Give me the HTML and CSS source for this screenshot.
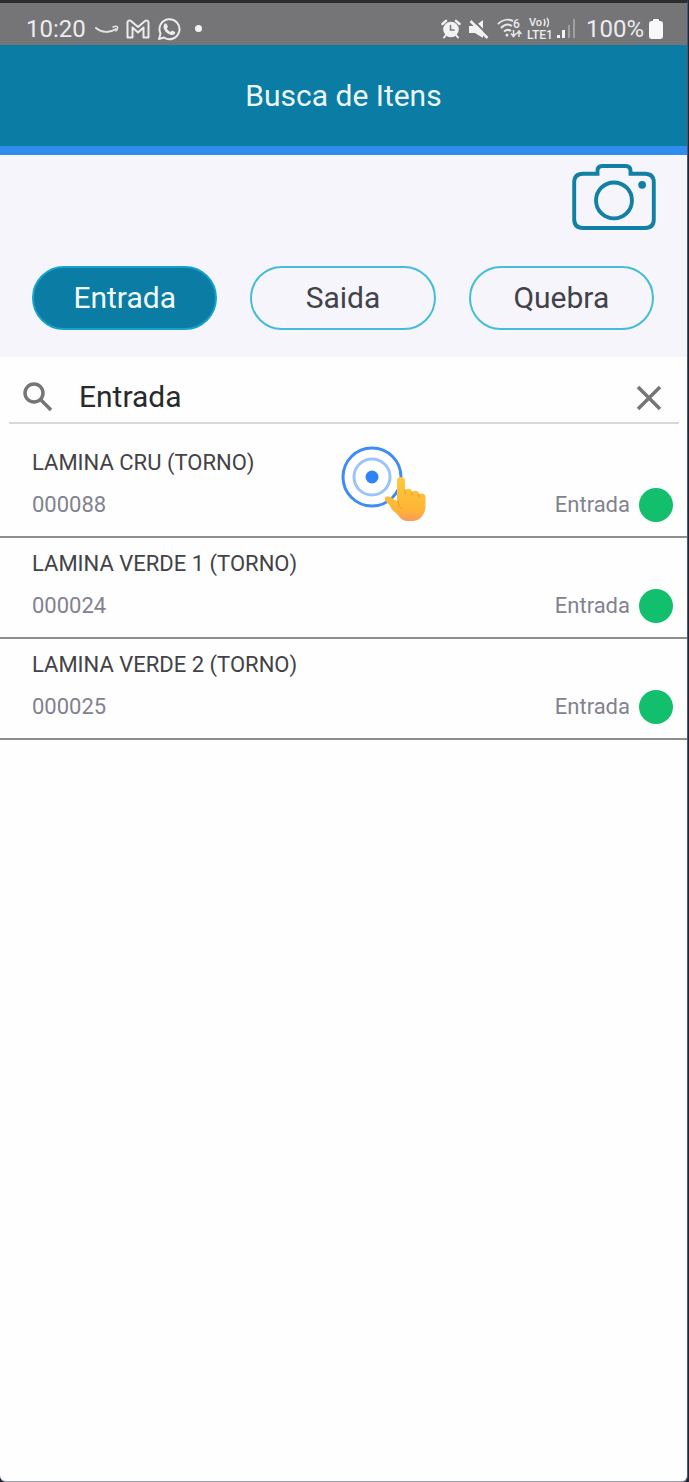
FILE: index.html
```html
<!DOCTYPE html>
<html lang="pt-BR">
<head>
    <meta charset="UTF-8">
    <meta name="viewport" content="width=device-width, initial-scale=1.0">
    <title>Busca de Itens</title>
    <link rel="stylesheet" href="styles.css">
</head>
<body>

<div class="screen">
    <!-- Phone status bar -->
    <div class="status-bar">
        <div class="status-group">
            <span class="time">10:20</span>
            <svg width="24" height="24" viewBox="0 0 24 24" fill="none" stroke="#e4e4e6" stroke-linecap="round">
                <path d="M1 11c6 5 14 5 20 1" stroke-width="2"/>
                <path d="M18 10c3-1 5-1 4.500 1c0 1-.5 2-1.500 3" stroke-width="1.500"/>
            </svg>
            <svg width="24" height="24" viewBox="0 0 24 24" fill="none" stroke="#ececee" stroke-width="2" stroke-linejoin="round">
                <path d="M1.500 20.500V5.500c0-2 2-2.500 3.500-1.500l7 6 7-6c1.500-1 3.500-.5 3.500 1.500v15h-5v-10L12 15.500l-5.500-5v10z"/>
            </svg>
            <svg width="24" height="24" viewBox="0 0 24 24">
                <path d="M2 22l1.500-5.500a10 10 0 1 1 3.500 4z" fill="none" stroke="#ececee" stroke-width="2" stroke-linejoin="round"/>
                <path d="M8 6.500l1.500 0 1.500 3.500-1.200 1.500c.8 1.600 2 2.700 3.700 3.500l1.500-1.500 3.200 1.600c.2 2-1.400 3-3.200 2.900-4.500-.5-8-4-8.500-8 0-1.500.5-2.900 1.500-3.500z" fill="#ececee"/>
            </svg>
            <span class="more-dot"></span>
        </div>
        <div class="status-group status-right">
            <svg class="alert-icon" width="20" height="20" viewBox="0 0 20 20" fill="none" stroke="#f2f2f4" stroke-linecap="round">
                <path d="M1.500 5L5 1.800M18.500 5L15 1.800" stroke-width="2.500"/>
                <circle cx="10" cy="10.500" r="7.800" fill="#f2f2f4" stroke="none"/>
                <path d="M5 16l-2 2.500M15 16l2 2.500" stroke-width="2"/>
                <path d="M9.500 6.500v4.500h3.500" stroke="#757577" stroke-width="1.500"/>
            </svg>
            <svg class="alert-icon" width="20" height="20" viewBox="0 0 20 20">
                <path d="M0 7h6l8-6v18l-8-5H0z" fill="#f2f2f4"/>
                <path d="M3 0l17 17" stroke="#757577" stroke-width="2"/>
                <path d="M1.500 2l17 17" stroke="#f2f2f4" stroke-width="2.500"/>
            </svg>
            <svg width="25" height="24" viewBox="0 0 25 24" fill="none" stroke="#e6e6e8" stroke-width="2">
                <path d="M1 7c5-5 11-5 15-3M4 11c4-4 8-4 11-2M7 14.500c3-2.500 5-2 7-.5"/>
                <circle cx="10" cy="18" r="1.500" fill="#e6e6e8" stroke="none"/>
                <text class="wifi-num" x="16" y="11">6</text>
                <path d="M16.500 13v6M14 16.500l2.500 3 2.500-3M22 20v-6M19.500 17l2.500-3 2.500 3" stroke-width="1.500"/>
            </svg>
            <svg width="25" height="24" viewBox="0 0 25 24">
                <text class="volte-top" x="2" y="9">Vo</text>
                <path d="M17 2q2 3.500 0 7M20 1q3 4.500 0 9" fill="none" stroke="#e6e6e8" stroke-width="1.500"/>
                <text class="volte" x="0" y="22">LTE1</text>
            </svg>
            <svg width="19" height="20" viewBox="0 0 19 20">
                <path d="M0 16h3v3H0zM5 11h3v8H5z" fill="#f2f2f4"/>
                <path d="M11 6h2v13h-2zM16 0h2v19h-2z" fill="#a0a0a2"/>
            </svg>
            <span class="battery-text">100%</span>
            <svg width="14" height="22" viewBox="0 0 14 22">
                <path d="M4 3V2q0-1 1-1h4q1 0 1 1v1h1q3 0 3 3v12q0 3-3 3H3q-3 0-3-3V6q0-3 3-3z" fill="#f8f8fa"/>
            </svg>
        </div>
    </div>

    <header class="header">
        <h1>Busca de Itens</h1>
    </header>

    <!-- Camera and type filter -->
    <div class="filters">
        <button class="camera" type="button" aria-label="Ler com a câmera">
            <svg width="84" height="66" viewBox="0 0 86 68" fill="none" stroke="#127fa4" stroke-width="4">
                <path d="M10 10h16V7q0-5 5-5h24q5 0 5 5v3h15q9 0 9 9v38q0 9-9 9H11q-9 0-9-9V19q0-9 9-9"/>
                <circle cx="43" cy="37.500" r="18.500"/>
                <circle cx="72" cy="21.500" r="4" fill="#127fa4" stroke="none"/>
            </svg>
        </button>
        <div class="types">
            <button class="type active" type="button">Entrada</button>
            <button class="type" type="button">Saida</button>
            <button class="type" type="button">Quebra</button>
        </div>
    </div>

    <form class="search">
        <label for="search-input" aria-label="Buscar">
            <svg width="30" height="30" viewBox="0 0 30 30" fill="none" stroke="#757575" stroke-width="3.500">
                <circle cx="11" cy="11" r="9"/>
                <path d="M17.500 17.500l10.500 10.500"/>
            </svg>
        </label>
        <input type="text" id="search-input" value="Entrada">
        <button class="clear" type="reset" aria-label="Limpar">
            <svg width="26" height="26" viewBox="0 0 26 26" stroke="#757575" stroke-width="3.500">
                <path d="M2 3l22 22M24 3L2 25"/>
            </svg>
        </button>
    </form>

    <ul class="items">
        <li class="item">
            <div class="name">LAMINA CRU (TORNO)</div>
            <div class="details">
                <span class="code">000088</span>
                <span class="kind">Entrada</span>
                <span class="dot"></span>
            </div>
            <!-- Tap hint -->
            <svg class="tap" width="86" height="78" viewBox="0 0 86 78" fill="none">
                <defs>
                    <linearGradient id="skin" x1="0" y1="0" x2="0" y2="1">
                        <stop offset="0" stop-color="#ffc83d"/>
                        <stop offset=".75" stop-color="#fdb535"/>
                        <stop offset="1" stop-color="#fb9a5c"/>
                    </linearGradient>
                </defs>
                <circle cx="31" cy="31" r="29" fill="#fff" stroke="#3f8cf7" stroke-width="3"/>
                <circle cx="31" cy="31" r="18" stroke="#9cc4fc" stroke-width="3"/>
                <circle cx="31" cy="31" r="6.500" fill="#2d83f7"/>
                <path d="M56 35q0-4 4-4t4 4v9q3-2 5-1 2 1 2 3 3-2 5-1 2 1 2 3 6-2 6.500 3v9q0 7-5 12-3 3-7 3h-6q-5 0-8-4-3-4-6-6-3-3-4-6l-4-4q-2-3 1-4.500 4-1 8 3.500l2.500 1z" fill="url(#skin)"/>
                <path d="M64 44v4M71 46v3M78 48v3M57 55q0 5 4 8" stroke="#e89a22" stroke-width="1" stroke-linecap="round"/>
            </svg>
        </li>
        <li class="item">
            <div class="name">LAMINA VERDE 1 (TORNO)</div>
            <div class="details">
                <span class="code">000024</span>
                <span class="kind">Entrada</span>
                <span class="dot"></span>
            </div>
        </li>
        <li class="item">
            <div class="name">LAMINA VERDE 2 (TORNO)</div>
            <div class="details">
                <span class="code">000025</span>
                <span class="kind">Entrada</span>
                <span class="dot"></span>
            </div>
        </li>
    </ul>
</div>

</body>
</html>
```
FILE: styles.css
```css
* {
    box-sizing: border-box;
}

body {
    margin: 0;
    background-color: #232734;
    font-family: Roboto, "Liberation Sans", sans-serif;
    color: #424248;
}

button,
input {
    font-family: inherit;
    border: none;
    background: none;
    padding: 0;
}

button {
    cursor: pointer;
}

svg {
    display: block;
    flex-shrink: 0;
}

.screen {
    min-height: 100vh;
    margin-right: 1px;
    background-color: #fefefe;
    border-top: 3px solid #2c2c2d;
    border-right: 1px solid #4a5878;
    border-bottom: 1px solid #9a9cac;
    border-radius: 0 0 6px 6px;
}

/* Status bar */
.status-bar {
    display: flex;
    justify-content: space-between;
    align-items: center;
    height: 42px;
    padding: 9px 24px 0 26px;
    background-color: #757577;
    color: #ececee;
    font-size: 24px;
}

.status-group {
    display: flex;
    align-items: center;
    gap: 7px;
}

.status-right {
    gap: 5px;
}

.time {
    margin-right: 2px;
}

.more-dot {
    width: 7px;
    height: 7px;
    margin-left: 7px;
    border-radius: 50%;
    background-color: #f2f2f4;
}

.alert-icon {
    margin-right: 3px;
}

.battery-text {
    margin-left: 5px;
}

.wifi-num,
.volte,
.volte-top {
    font-size: 12px;
    font-weight: 500;
    fill: #ececee;
    stroke: none;
}

.volte-top {
    font-size: 11px;
}

/* Header */
.header {
    display: flex;
    justify-content: center;
    align-items: center;
    height: 110px;
    background-color: #0b7ca3;
    border-bottom: 9px solid #2f8df0;
}

.header h1 {
    margin: 0;
    font-size: 30px;
    font-weight: 400;
    color: #ecf6fa;
}

/* Filters */
.filters {
    padding: 9px 33px 27px 32px;
    background-color: #f5f5fb;
}

.camera {
    display: block;
    margin: 0 -2px 36px auto;
}

.types {
    display: flex;
    gap: 33px;
}

.type {
    flex: 1;
    height: 64px;
    padding-bottom: 2px;
    border: 2px solid #43bdd8;
    border-radius: 32px;
    font-size: 30px;
    color: #424248;
}

.type.active {
    background-color: #0b7ca3;
    border-color: #15a2cb;
    color: #f2fafc;
}

/* Search */
.search {
    display: flex;
    align-items: center;
    margin: 0 8px 0 9px;
    padding: 16px 17px 2px 14px;
    border-bottom: 2px solid #d8d8dc;
}

.search input {
    flex: 1;
    min-width: 0;
    height: 47px;
    margin-left: 26px;
    font-size: 30px;
    color: #29292b;
    outline: none;
}

/* Items */
.items {
    margin: 0;
    padding: 13px 0 0;
    list-style: none;
}

.item {
    position: relative;
    padding: 9px 14px 14px 32px;
    border-bottom: 2px solid #8e8e8e;
    font-size: 22px;
    line-height: 34px;
}

.details {
    display: flex;
    align-items: center;
    gap: 9px;
    margin-top: 8px;
    color: #82828f;
}

.code {
    flex: 1;
}

.dot {
    width: 34px;
    height: 34px;
    border-radius: 50%;
    background-color: #12bf6d;
}

.tap {
    position: absolute;
    top: 9px;
    left: calc(50% - 3px);
}
```
